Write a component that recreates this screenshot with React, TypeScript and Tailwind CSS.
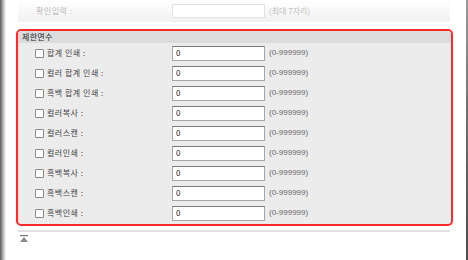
const rows = [
  "합계 인쇄 :",
  "컬러 합계 인쇄 :",
  "흑백 합계 인쇄 :",
  "컬러복사 :",
  "컬러스캔 :",
  "컬러인쇄 :",
  "흑백복사 :",
  "흑백스캔 :",
  "흑백인쇄 :",
];

const font = { fontFamily: '"Noto Sans CJK KR", "Liberation Sans", sans-serif' };

function TopIcon() {
  return (
    <svg width="8" height="7" viewBox="0 0 8 7" className="block">
      <rect x="0" y="0" width="8" height="1.2" fill="#777" />
      <path d="M4 2 L8 7 L0 7 Z" fill="#888" />
    </svg>
  );
}

export default function App() {
  return (
    <div
      className="w-[468px] h-[260px] bg-white flex overflow-hidden text-[8px] leading-none"
      style={font}
    >
      {/* left edge shadow */}
      <div className="w-[6px] h-full bg-linear-to-r from-[#5a5a5a] via-[#b0b0b0] to-white" />

      <div className="w-[460px] flex flex-col">
        {/* faded row above */}
        <div className="ml-[12px] w-[432px] h-[22px] flex items-center bg-linear-to-b from-white to-[#f1f1f1]">
          <span className="ml-[18px] w-[136px] text-[#b5b5b5] tracking-[0.5px]">확인입력 :</span>
          <div className="w-[93px] h-[14px] bg-white border border-[#e2e2e2]" />
          <span className="ml-[4px] text-[#c0c0c0]">(최대 7자리)</span>
        </div>

        {/* red framed section */}
        <div className="mt-[7px] ml-[10px] w-[437px] h-[197px] border-2 border-[#ff2b2b] rounded-[5px] bg-[#ececec] overflow-hidden flex flex-col">
          <div className="h-[12px] bg-[#dcdcdc] flex items-center pl-[4px] text-[#222] tracking-[0.3px]">
            제한면수
          </div>
          {rows.map((label) => (
            <div key={label} className="h-[20px] flex items-center">
              <div className="ml-[17px] w-[9px] h-[9px] bg-white border border-[#8a8a8a] rounded-[1px]" />
              <span className="ml-[3px] w-[125px] text-[#444] tracking-[0.5px]">{label}</span>
              <div className="w-[93px] h-[15px] bg-white border border-[#a6a6a6] border-t-[#7a7a7a] flex items-center pl-[3px] text-[#222]">
                0
              </div>
              <span
                className="ml-[4px] text-[#666]"
                style={{ fontFamily: '"Liberation Sans", sans-serif' }}
              >
                (0-999999)
              </span>
            </div>
          ))}
        </div>

        <div className="mt-[4px] ml-[12px] w-[432px] h-[2px] bg-[#e0e0e0]" />
        <div className="mt-[3px] ml-[14px]">
          <TopIcon />
        </div>
      </div>

      {/* right edge */}
      <div className="ml-auto w-[2px] h-full bg-linear-to-b from-[#9a9a9a] via-[#6a6a6a] to-[#4a4a4a]" />
    </div>
  );
}
